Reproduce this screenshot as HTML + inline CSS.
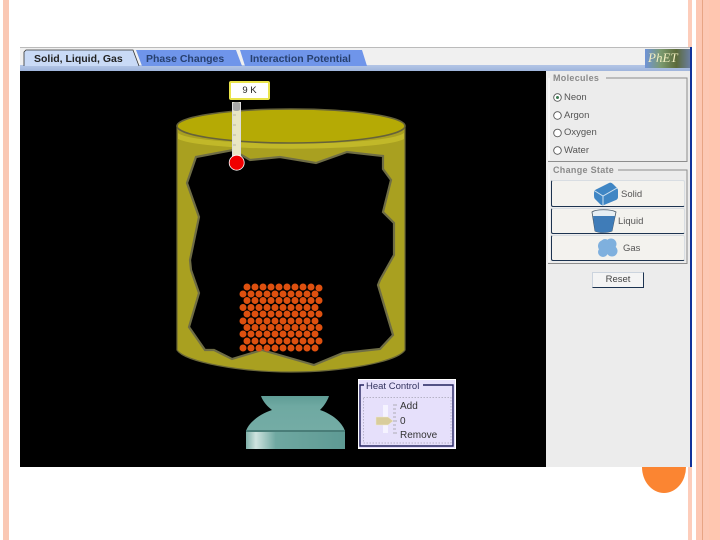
<!DOCTYPE html>
<html>
<head>
<meta charset="utf-8">
<style>
html,body{margin:0;padding:0;background:#fff;}
#p{position:relative;width:720px;height:540px;overflow:hidden;background:#fff;font-family:"Liberation Sans",sans-serif;filter:blur(.35px);}
#p div{position:absolute;box-sizing:border-box;}
.t{white-space:nowrap;}
.btn{left:551px;width:134px;background:#f3f2ee;border:1px solid #d8dde2;border-bottom:1.5px solid #1c3350;border-left:1px solid #1c3350;border-radius:2px;}
.lbl{font-size:9.5px;color:#555;}
svg{position:absolute;left:0;top:0;}
</style>
</head>
<body>
<div id="p">
<div style="left:3px;top:0;width:6px;height:540px;background:#fac8b4"></div>
<div style="left:688px;top:0;width:4px;height:540px;background:#fdcdbb"></div>
<div style="left:696px;top:0;width:24px;height:540px;background:#fdc8b4"></div>
<div style="left:702px;top:0;width:1px;height:540px;background:#e8a585"></div>
<div style="left:709px;top:0;width:11px;height:540px;background:#ffc6b0"></div>

<div style="left:20px;top:47px;width:670px;height:20px;background:#f0f0f0;border-top:1px solid #bbb"></div>
<div style="left:20px;top:65px;width:670px;height:6px;background:linear-gradient(#b4c6e6,#9fb5dc)"></div>
<div style="left:20px;top:71px;width:526px;height:396px;background:#000"></div>
<div style="left:546px;top:71px;width:144px;height:396px;background:#ececec"></div>
<div style="left:690px;top:47px;width:2px;height:420px;background:#12329a"></div>

<div style="left:645px;top:49px;width:45px;height:19px;background:linear-gradient(90deg,#6f93d8 0,#7b9a70 35%,#5b6a3a 70%,#6a7ea0 100%)"></div>
<div class="t" style="left:648px;top:50px;font:italic 13px 'Liberation Serif',serif;color:#f1eec0">PhET</div>

<svg width="720" height="540" viewBox="0 0 720 540">
 <path d="M664 467H642a22 26 0 0 0 44 0Z" fill="#fb8532"/>
 <!-- tabs -->
 <path d="M136 50H236L242 66H142Z" fill="#6f95ea"/>
 <path d="M240 50H362L367 66H245Z" fill="#6f95ea"/>
 <path d="M24 66V52L26 50H133L139 66Z" fill="#c9daf6"/>
 <path d="M24 66V52L26 50H133L139 66" fill="none" stroke="#333" stroke-width=".8"/>

 <!-- container -->
 <path d="M177 126V350C185 362 240 372 291 372C342 372 397 362 405 350V126Z" fill="#a9a020" stroke="#6b6838" stroke-width="1.2"/>
 <path d="M178 133C195 147 387 147 404 133V139C380 152 205 152 178 139Z" fill="#c9c02c" opacity=".75"/>
 <ellipse cx="291" cy="126" rx="114" ry="17" fill="#b5aa05" stroke="#66623a" stroke-width="1.6"/>
 <path d="M196 157L233 150L250 160L280 157L316 163L347 152L383 156L383 169L391 180L383 212L394 223L394 255L380 280L378 285L393 335L380 349L343 353L314 365L262 350L232 359L214 350L205 350L189 327L199 293L191 270L190 260L199 217L187 183Z" fill="#000" stroke="#6f6d45" stroke-width="2.2" stroke-linejoin="miter"/>

 <!-- thermometer -->
 <rect x="232.500" y="102" width="8" height="56" fill="#e9e6c4"/>
 <rect x="232.500" y="102" width="8" height="9" rx="3" fill="#a8a8a8"/>
 <rect x="232" y="102" width="1" height="56" fill="#ddd"/>
 <rect x="240" y="102" width="1" height="56" fill="#ddd"/>
 <path d="M233 115H236M233 125H236M233 135H236M233 145H236" stroke="#888" stroke-width=".6"/>
 <circle cx="236.700" cy="162.700" r="7.500" fill="#f00000" stroke="#fff" stroke-width=".8"/>

 <!-- atoms -->
 <g fill="#de500f">
  <g><circle cx="247" cy="287" r="3.500"/><circle cx="255" cy="287" r="3.500"/><circle cx="263" cy="287" r="3.500"/><circle cx="271" cy="287" r="3.500"/><circle cx="279" cy="287" r="3.500"/><circle cx="287" cy="287" r="3.500"/><circle cx="295" cy="287" r="3.500"/><circle cx="303" cy="287" r="3.500"/><circle cx="311" cy="287" r="3.500"/><circle cx="319" cy="288" r="3.500"/></g>
  <g><circle cx="243" cy="294" r="3.500"/><circle cx="251" cy="294" r="3.500"/><circle cx="259" cy="294" r="3.500"/><circle cx="267" cy="294" r="3.500"/><circle cx="275" cy="294" r="3.500"/><circle cx="283" cy="294" r="3.500"/><circle cx="291" cy="294" r="3.500"/><circle cx="299" cy="294" r="3.500"/><circle cx="307" cy="294" r="3.500"/><circle cx="315" cy="294" r="3.500"/></g>
  <g><circle cx="247" cy="300.500" r="3.500"/><circle cx="255" cy="300.500" r="3.500"/><circle cx="263" cy="300.500" r="3.500"/><circle cx="271" cy="300.500" r="3.500"/><circle cx="279" cy="300.500" r="3.500"/><circle cx="287" cy="300.500" r="3.500"/><circle cx="295" cy="300.500" r="3.500"/><circle cx="303" cy="300.500" r="3.500"/><circle cx="311" cy="300.500" r="3.500"/><circle cx="319" cy="300.500" r="3.500"/></g>
  <g><circle cx="243" cy="307.500" r="3.500"/><circle cx="251" cy="307.500" r="3.500"/><circle cx="259" cy="307.500" r="3.500"/><circle cx="267" cy="307.500" r="3.500"/><circle cx="275" cy="307.500" r="3.500"/><circle cx="283" cy="307.500" r="3.500"/><circle cx="291" cy="307.500" r="3.500"/><circle cx="299" cy="307.500" r="3.500"/><circle cx="307" cy="307.500" r="3.500"/><circle cx="315" cy="307.500" r="3.500"/></g>
  <g><circle cx="247" cy="314" r="3.500"/><circle cx="255" cy="314" r="3.500"/><circle cx="263" cy="314" r="3.500"/><circle cx="271" cy="314" r="3.500"/><circle cx="279" cy="314" r="3.500"/><circle cx="287" cy="314" r="3.500"/><circle cx="295" cy="314" r="3.500"/><circle cx="303" cy="314" r="3.500"/><circle cx="311" cy="314" r="3.500"/><circle cx="319" cy="314" r="3.500"/></g>
  <g><circle cx="243" cy="321" r="3.500"/><circle cx="251" cy="321" r="3.500"/><circle cx="259" cy="321" r="3.500"/><circle cx="267" cy="321" r="3.500"/><circle cx="275" cy="321" r="3.500"/><circle cx="283" cy="321" r="3.500"/><circle cx="291" cy="321" r="3.500"/><circle cx="299" cy="321" r="3.500"/><circle cx="307" cy="321" r="3.500"/><circle cx="315" cy="321" r="3.500"/></g>
  <g><circle cx="247" cy="327.500" r="3.500"/><circle cx="255" cy="327.500" r="3.500"/><circle cx="263" cy="327.500" r="3.500"/><circle cx="271" cy="327.500" r="3.500"/><circle cx="279" cy="327.500" r="3.500"/><circle cx="287" cy="327.500" r="3.500"/><circle cx="295" cy="327.500" r="3.500"/><circle cx="303" cy="327.500" r="3.500"/><circle cx="311" cy="327.500" r="3.500"/><circle cx="319" cy="327.500" r="3.500"/></g>
  <g><circle cx="243" cy="334" r="3.500"/><circle cx="251" cy="334" r="3.500"/><circle cx="259" cy="334" r="3.500"/><circle cx="267" cy="334" r="3.500"/><circle cx="275" cy="334" r="3.500"/><circle cx="283" cy="334" r="3.500"/><circle cx="291" cy="334" r="3.500"/><circle cx="299" cy="334" r="3.500"/><circle cx="307" cy="334" r="3.500"/><circle cx="315" cy="334" r="3.500"/></g>
  <g><circle cx="247" cy="341" r="3.500"/><circle cx="255" cy="341" r="3.500"/><circle cx="263" cy="341" r="3.500"/><circle cx="271" cy="341" r="3.500"/><circle cx="279" cy="341" r="3.500"/><circle cx="287" cy="341" r="3.500"/><circle cx="295" cy="341" r="3.500"/><circle cx="303" cy="341" r="3.500"/><circle cx="311" cy="341" r="3.500"/><circle cx="319" cy="341" r="3.500"/></g>
  <g><circle cx="243" cy="348" r="3.500"/><circle cx="251" cy="348" r="3.500"/><circle cx="259" cy="348" r="3.500"/><circle cx="267" cy="348" r="3.500"/><circle cx="275" cy="348" r="3.500"/><circle cx="283" cy="348" r="3.500"/><circle cx="291" cy="348" r="3.500"/><circle cx="299" cy="348" r="3.500"/><circle cx="307" cy="348" r="3.500"/><circle cx="315" cy="348" r="3.500"/></g>
 </g>

 <!-- stove -->
 <defs>
  <linearGradient id="g" x1="0" x2="1" y1="0" y2="0">
   <stop offset="0" stop-color="#7fb0a9"/><stop offset=".1" stop-color="#cfe3df"/><stop offset=".3" stop-color="#6fa8a1"/><stop offset="1" stop-color="#5e9a94"/>
  </linearGradient>
  <linearGradient id="g2" x1="0" x2="0" y1="0" y2="1">
   <stop offset="0" stop-color="#5f9c95"/><stop offset=".3" stop-color="#6fa9a2"/><stop offset="1" stop-color="#74aca5"/>
  </linearGradient>
 </defs>
 <path d="M261 396H329C327 402 323 407 320 410C332 414 342 422 345 431H246C249 422 260 414 272 410C268 407 263 402 261 396Z" fill="url(#g2)"/>
 <rect x="246" y="431" width="99" height="18" fill="url(#g)"/>
 <rect x="246" y="430" width="99" height="2" fill="#497d78"/>

 <!-- heat control -->
 <rect x="358.500" y="379.500" width="97" height="69" fill="#e6e0fb" stroke="#fff"/>
 <path d="M423 385H453V446H360V385H364" fill="none" stroke="#22225e" stroke-width="1.400"/>
 <rect x="363.500" y="397.500" width="87.500" height="45.500" fill="none" stroke="#a5a2b5" stroke-width=".7" stroke-dasharray="1.500 1.500"/>
 <rect x="383" y="405" width="5" height="28" fill="#f5f3ff"/>
 <path d="M376 417H388L393 421L388 425H376Z" fill="#d9cd9c" stroke="#f0ead0" stroke-width=".5"/>
 <path d="M393 405H397M393 409H396M393 413H396M393 417H396M393 421H397M393 425H396M393 429H396M393 433H397" stroke="#9c9ca0" stroke-width=".8"/>

 <!-- group boxes -->
 <path d="M606 78H687V161.500H548" fill="none" stroke="#8d8d8d"/>
 <path d="M618 170H687V263.500H548" fill="none" stroke="#8d8d8d"/>
 <path d="M549 78V160M549 170V262" fill="none" stroke="#fff"/>
 <g fill="#fff" stroke="#555" stroke-width=".9">
  <circle cx="557.500" cy="97.500" r="3.800"/><circle cx="557.500" cy="115.500" r="3.800"/><circle cx="557.500" cy="133" r="3.800"/><circle cx="557.500" cy="150.500" r="3.800"/>
 </g>
 <circle cx="557.500" cy="97.500" r="1.500" fill="#3a7a50"/>
</svg>

<div class="t" style="left:34px;top:53px;font-size:10.500px;font-weight:bold;color:#222">Solid, Liquid, Gas</div>
<div class="t" style="left:146px;top:53px;font-size:10.500px;font-weight:bold;color:#27406f">Phase Changes</div>
<div class="t" style="left:250px;top:53px;font-size:10.500px;font-weight:bold;color:#27406f">Interaction Potential</div>

<div style="left:229px;top:81px;width:41px;height:19px;background:#fff;border:2px solid #e9e34a;border-radius:2px;font-size:9.500px;line-height:15px;text-align:center;color:#222">9 K</div>

<div class="t" style="left:553px;top:73px;font-size:9px;font-weight:bold;color:#8a8a8a;letter-spacing:.3px;background:#ececec;padding-right:3px">Molecules</div>
<div class="t lbl" style="left:564px;top:92px">Neon</div>
<div class="t lbl" style="left:564px;top:110px">Argon</div>
<div class="t lbl" style="left:564px;top:127px">Oxygen</div>
<div class="t lbl" style="left:564px;top:145px">Water</div>
<div class="t" style="left:553px;top:165px;font-size:9px;font-weight:bold;color:#8a8a8a;letter-spacing:.3px;background:#ececec;padding-right:3px">Change State</div>

<div class="btn" style="top:180px;height:27px"></div>
<div class="btn" style="top:208px;height:26px"></div>
<div class="btn" style="top:235px;height:26px"></div>
<svg width="720" height="540" viewBox="0 0 720 540">
 <path d="M594 193Q594 190 597 189L609 183Q611 182 613 184L617 188Q618 189 618 191V197Q618 199 616 200L604 205Q602 206 600 204L595 199Q594 198 594 196Z" fill="#3f86c4"/>
 <path d="M595 191L603 196L617 188" fill="none" stroke="#cfe2f1" stroke-width="1"/>
 <path d="M603 196V205" stroke="#cfe2f1" stroke-width="1"/>
 <path d="M592 212C596 209 611 209 616 212L612 231C607 233 599 233 595 231Z" fill="#e6eef3" stroke="#456" stroke-width=".8"/>
 <path d="M593 216H615L612 231C607 233 599 233 595 231Z" fill="#3f7cb8"/>
 <g fill="#7fb0de"><circle cx="604" cy="246" r="6"/><circle cx="611" cy="244" r="5.500"/><circle cx="603" cy="252" r="5"/><circle cx="612" cy="251" r="5.500"/><circle cx="605" cy="243" r="4"/></g>
</svg>
<div class="t lbl" style="left:621px;top:189px">Solid</div>
<div class="t lbl" style="left:618px;top:216px">Liquid</div>
<div class="t lbl" style="left:623px;top:243px">Gas</div>

<div style="left:592px;top:272px;width:52px;height:16px;background:#f4f4f4;border:1px solid #ccd4de;border-right:1px solid #1c3350;border-bottom:1px solid #1c3350;font-size:9.500px;line-height:14px;text-align:center;color:#444">Reset</div>

<div class="t" style="left:365px;top:381px;font-size:9.500px;color:#33335f;background:#e6e0fb;padding:0 3px 0 1px;line-height:11px">Heat Control</div>
<div class="t" style="left:400px;top:401px;font-size:10px;color:#333">Add</div>
<div class="t" style="left:400px;top:416px;font-size:10px;color:#333">0</div>
<div class="t" style="left:400px;top:430px;font-size:10px;color:#333">Remove</div>
</div>
</body>
</html>
